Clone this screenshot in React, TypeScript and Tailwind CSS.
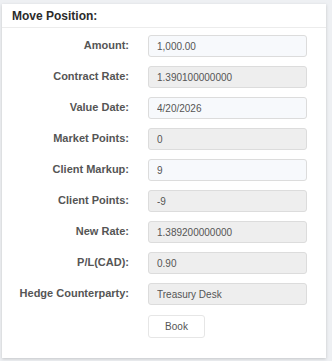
import type { ReactNode } from 'react'

const rows: { label: string; value: string; editable?: boolean }[] = [
  { label: 'Amount:', value: '1,000.00', editable: true },
  { label: 'Contract Rate:', value: '1.390100000000' },
  { label: 'Value Date:', value: '4/20/2026', editable: true },
  { label: 'Market Points:', value: '0' },
  { label: 'Client Markup:', value: '9', editable: true },
  { label: 'Client Points:', value: '-9' },
  { label: 'New Rate:', value: '1.389200000000' },
  { label: 'P/L(CAD):', value: '0.90' },
  { label: 'Hedge Counterparty:', value: 'Treasury Desk' },
]

function Row({ label, children }: { label: string; children: ReactNode }) {
  return (
    <div className="flex items-center h-[22px]">
      <label className="w-[127px] text-right text-[11px] font-bold text-[#555]">{label}</label>
      <div className="ml-[19px]">{children}</div>
    </div>
  )
}

export default function App() {
  return (
    <div className="w-[332px] h-[361px] bg-[#eef0f3] pt-[4px] pl-[2px] font-['Liberation_Sans',Arial,sans-serif]">
      <div className="w-[324px] bg-white shadow-[0_1px_3px_rgba(0,0,0,0.18)]">
        <div className="h-[24px] px-[10px] flex items-center border-b border-[#ececec]">
          <h2 className="text-[12px] font-bold text-[#2b2b2b]">Move Position:</h2>
        </div>
        <div className="pt-[6px] pb-[20px] flex flex-col gap-[9px]">
          {rows.map((r) => (
            <Row key={r.label} label={r.label}>
              <input
                type="text"
                value={r.value}
                readOnly
                className={
                  'w-[159px] h-[22px] rounded-[3px] border border-[#dcdcdc] px-[8px] text-[10px] text-[#555] outline-none ' +
                  (r.editable ? 'bg-[#f7f9fc]' : 'bg-[#eeeeee]')
                }
              />
            </Row>
          ))}
          <div className="flex pl-[146px] mt-[2px]">
            <button
              type="button"
              className="w-[57px] h-[23px] rounded-[3px] border border-[#e6e6e6] bg-white text-[10px] text-[#555]"
            >
              Book
            </button>
          </div>
        </div>
      </div>
    </div>
  )
}
